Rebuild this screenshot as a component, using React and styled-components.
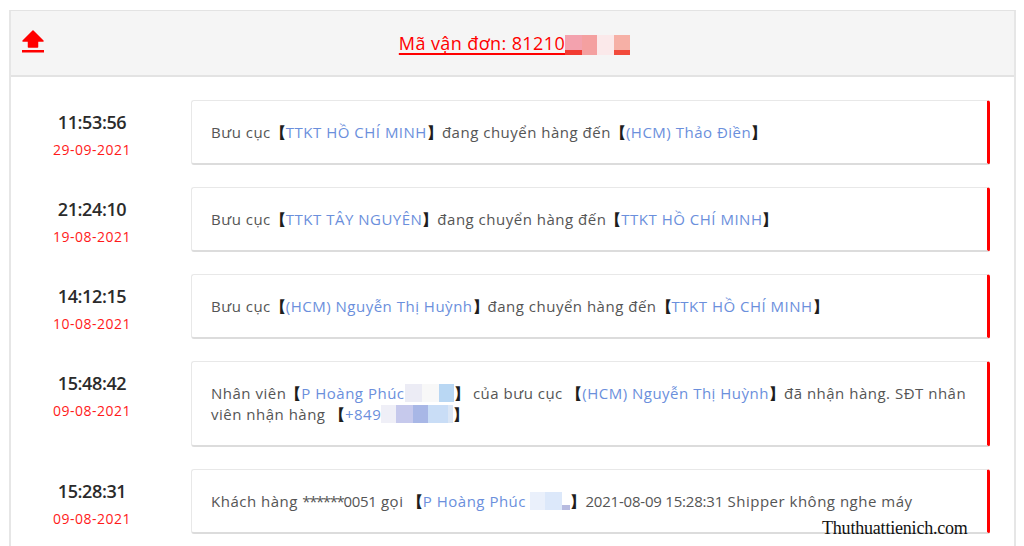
import React from "react";
import styled, { createGlobalStyle } from "styled-components";

const Global = createGlobalStyle`
  html, body { margin: 0; padding: 0; background: #fff; }
  body { font-family: "Open Sans", "Noto Sans", sans-serif; overflow: hidden; }
`;

const Page = styled.div`
  position: relative;
  width: 1024px;
  height: 546px;
  padding: 10px 8px 0 9px;
  box-sizing: border-box;
`;

const Panel = styled.div`
  border: 2px solid #e6e6e6;
  border-top: 1px solid #e3e3e3;
  border-bottom: none;
  height: 536px;
  box-sizing: border-box;
  display: flex;
  flex-direction: column;
`;

const Header = styled.div`
  height: 64px;
  background: #f5f5f5;
  border-bottom: 2px solid #e3e3e3;
  display: flex;
  align-items: center;
  position: relative;
  flex-shrink: 0;
`;

const BackIcon = styled.svg`
  position: absolute;
  left: 9px;
  top: 18px;
`;

const Title = styled.a`
  margin: 0 auto;
  color: #f00;
  font-size: 18px;
  font-weight: 500;
  letter-spacing: 0.4px;
  text-decoration: underline;
  text-decoration-thickness: 2px;
  text-underline-offset: 3px;
  display: inline-flex;
  align-items: flex-end;
  transform: translateX(2px);
`;

const Mask = styled.span`
  display: inline-block;
  width: ${(p) => p.w}px;
  height: ${(p) => p.h || 18}px;
  background: ${(p) => p.c};
  border-bottom: ${(p) => (p.b ? `${p.bh || 5}px solid ${p.b}` : "none")};
  box-sizing: border-box;
  vertical-align: ${(p) => p.va || "-3px"};
`;

const Body = styled.div`
  padding: 23px 24px 0 0;
  display: flex;
  flex-direction: column;
  gap: 22px;
`;

const Row = styled.div`
  display: flex;
  align-items: flex-start;
`;

const When = styled.div`
  width: 162px;
  margin-right: 18px;
  flex-shrink: 0;
  display: flex;
  flex-direction: column;
  align-items: center;
  padding-top: 10px;
`;

const Time = styled.div`
  font-size: 18px;
  font-weight: 600;
  color: #2b2b2b;
  line-height: 24px;
  letter-spacing: -0.4px;
`;

const DateText = styled.div`
  font-size: 14px;
  color: #ff1a1a;
  line-height: 20px;
  margin-top: 6px;
  letter-spacing: 0.5px;
`;

const Card = styled.div`
  flex: 1;
  background: #fff;
  border: 1px solid #e8e8e8;
  border-bottom: 2px solid #dcdcdc;
  border-right: 3px solid #f00;
  border-radius: 3px;
  padding: 21px 16px 20px 19px;
  font-size: 15px;
  line-height: 21px;
  color: #555;
  letter-spacing: 0.5px;
`;

const Tight = styled.span`
  letter-spacing: ${(p) => p.ls || "-0.3px"};
`;

const Link = styled.span`
  color: #6b8fdc;
`;

const Br = styled.span`
  color: #1e1e1e;
  font-weight: 600;
  letter-spacing: 0;
`;

const Watermark = styled.div`
  position: absolute;
  left: 822px;
  top: 518px;
  font-family: "Liberation Serif", serif;
  font-size: 18px;
  color: #111;
  letter-spacing: -0.2px;
`;

const L = ({ children }) => (
  <>
    <Br>【</Br>
    <Link>{children}</Link>
    <Br>】</Br>
  </>
);

const rows = [
  {
    t: "11:53:56",
    d: "29-09-2021",
    c: (
      <>
        Bưu cục<L>TTKT HỒ CHÍ MINH</L>đang chuyển hàng đến<L>(HCM) Thảo Điền</L>
      </>
    ),
  },
  {
    t: "21:24:10",
    d: "19-08-2021",
    c: (
      <>
        Bưu cục<L>TTKT TÂY NGUYÊN</L>đang chuyển hàng đến<L>TTKT HỒ CHÍ MINH</L>
      </>
    ),
  },
  {
    t: "14:12:15",
    d: "10-08-2021",
    c: (
      <>
        Bưu cục<L>(HCM) Nguyễn Thị Huỳnh</L>đang chuyển hàng đến<L>TTKT HỒ CHÍ MINH</L>
      </>
    ),
  },
  {
    t: "15:48:42",
    d: "09-08-2021",
    c: (
      <>
        Nhân viên<Br>【</Br>
        <Link>P Hoàng Phúc</Link>
        <Mask w={17} c="#ececf5" />
        <Mask w={17} c="#f8f8f8" />
        <Mask w={15} c="#b9d7f3" />
        <Br>】</Br> của bưu cục <L>(HCM) Nguyễn Thị Huỳnh</L>đã nhận hàng. SĐT nhân viên nhận hàng <Br>【</Br>
        <Link>+849</Link>
        <Mask w={15} c="#efeff7" />
        <Mask w={17} c="#c6c9ec" />
        <Mask w={15} c="#a8b7e6" />
        <Mask w={20} c="#c9ddf6" />
        <Mask w={5} c="#dbe6f5" />
        <Br>】</Br>
      </>
    ),
  },
  {
    t: "15:28:31",
    d: "09-08-2021",
    c: (
      <>
        Khách hàng <Tight ls="-1.4px">******</Tight>
        <Tight>0051</Tight> gọi <Br>【</Br>
        <Link>P Hoàng Phúc</Link> <Mask w={15} c="#eaf0fb" />
        <Mask w={17} c="#dce8fa" />
        <Mask w={8} c="#fff" b="#b7bbe0" bh={5} />
        <Br>】</Br>
        <Tight ls="-0.2px">2021-08-09 15:28:31</Tight> Shipper không nghe máy
      </>
    ),
  },
];

export default function App() {
  return (
    <Page>
      <Global />
      <Panel>
        <Header>
          <BackIcon width="26" height="26" viewBox="0 0 26 26">
            <path d="M13 2 L23 12 L17.5 12 L17.5 18 L8.5 18 L8.5 12 L3 12 Z" fill="#f00" stroke="#f00" strokeWidth="1.5" strokeLinejoin="round" />
            <rect x="2" y="21" width="22" height="2.5" fill="#f00" />
          </BackIcon>
          <Title>
            Mã vận đơn: 81210
            <Mask w={17} h={20} c="#f3a2ae" b="#f23b32" bh={5} va="-4px" />
            <Mask w={15} h={20} c="#f4a0a0" va="-4px" />
            <Mask w={17} h={20} c="#fbe9ea" va="-4px" />
            <Mask w={16} h={20} c="#f6b0a6" b="#f24a3b" bh={5} va="-4px" />
          </Title>
        </Header>
        <Body>
          {rows.map((r, i) => (
            <Row key={i}>
              <When>
                <Time>{r.t}</Time>
                <DateText>{r.d}</DateText>
              </When>
              <Card>{r.c}</Card>
            </Row>
          ))}
        </Body>
      </Panel>
      <Watermark>Thuthuattienich.com</Watermark>
    </Page>
  );
}
